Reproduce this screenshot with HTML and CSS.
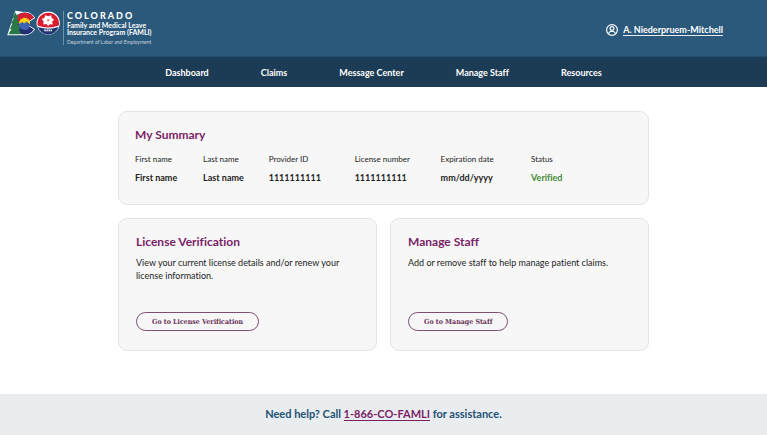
FILE: index.html
```html
<!DOCTYPE html>
<html lang="en">
<head>
<meta charset="utf-8">
<meta name="viewport" content="width=device-width, initial-scale=1">
<title>Colorado FAMLI</title>
<link rel="stylesheet" href="styles.css">
</head>
<body>
<header class="banner">
  <div class="brand">
    <svg class="brand-logo" viewBox="0 0 54 26" aria-hidden="true">
      <path d="M7.500-.5-.8 24.500H18V1z" fill="#fff"/>
      <circle cx="17" cy="12.500" r="12" fill="#fff"/>
      <circle cx="17" cy="12.500" r="11.200" fill="#23306f"/>
      <path d="M6 13A11.200 11.200 0 0 1 26.500 6.500L22 10a6 6 0 0 0-11 3z" fill="#d5202f"/>
      <circle cx="17" cy="12.500" r="5.800" fill="#fbd20b"/>
      <path d="m11.200 13 3.300-2 2 1.500 2.500-2 3.800 3a5.800 5.800 0 0 1-11.600-.5" fill="#3f62b5"/>
      <path d="M22.500 9.800 29 6v13.500l-6.500-4z" fill="#2b597c"/>
      <path d="m22 10 5.300-3.300M22 15.200l5.300 3.500" stroke="#fff"/>
      <path d="m7.500 1-3 6H6l-3 5.500h1.500L2 18h1.500L.5 23.500h13L11 18h1.500L10 12.500h1.500L9 7h1.500z" fill="#28784a"/>
      <circle cx="41" cy="12" r="11.800" fill="#fff"/>
      <path d="M30.200 14.500a11 11 0 1 1 21.600 0q-10.800 4-21.600 0" fill="#d91e32"/>
      <path d="M30.500 16q10.500 3.500 21 0a11 11 0 0 1-21 0" fill="#213570"/>
      <path d="m38 4 3 1 3-1 .5 3 2.500 1.500-2 2 .5 3-3-.2L41 15l-2-2-3 .5.3-3-2-2.500 2.700-1z" fill="#fff"/>
      <circle cx="41" cy="9" r="1.200" fill="#e9717a"/>
      <path d="M37 19.500h8" stroke="#fff" stroke-width="1.800" stroke-dasharray="1.500 .6"/>
    </svg>
    <div class="brand-text">
      <span class="brand-state">COLORADO</span>
      <span class="brand-program">Family and Medical Leave<br>Insurance Program (FAMLI)</span>
      <span class="brand-department">Department of Labor and Employment</span>
    </div>
  </div>
  <a class="account" href="#">
    <svg class="account-icon" viewBox="0 0 24 24" fill="none" stroke="currentColor" stroke-width="2.400" aria-hidden="true">
      <circle cx="12" cy="12" r="10.800"/>
      <circle cx="12" cy="9" r="3.800"/>
      <path d="M5.500 19.500v-1q1-3.500 4.500-3.500h4q3.500 0 4.500 3.500v1"/>
    </svg>
    <span class="account-name">A. Niederpruem-Mitchell</span>
  </a>
</header>
<nav class="menu" aria-label="Main">
  <a href="#">Dashboard</a>
  <a href="#">Claims</a>
  <a href="#">Message Center</a>
  <a href="#">Manage Staff</a>
  <a href="#">Resources</a>
</nav>
<main class="content">
  <section class="card summary">
    <h2>My Summary</h2>
    <table>
      <thead>
        <tr>
          <th class="col-name" scope="col">First name</th>
          <th class="col-surname" scope="col">Last name</th>
          <th class="col-number" scope="col">Provider ID</th>
          <th class="col-number" scope="col">License number</th>
          <th class="col-date" scope="col">Expiration date</th>
          <th scope="col">Status</th>
        </tr>
      </thead>
      <tbody>
        <tr>
          <td>First name</td>
          <td>Last name</td>
          <td>1111111111</td>
          <td>1111111111</td>
          <td>mm/dd/yyyy</td>
          <td class="verified">Verified</td>
        </tr>
      </tbody>
    </table>
  </section>
  <div class="actions">
    <section class="card action">
      <h2>License Verification</h2>
      <p>View your current license details and/or renew your license information.</p>
      <button type="button">Go to License Verification</button>
    </section>
    <section class="card action">
      <h2>Manage Staff</h2>
      <p>Add or remove staff to help manage patient claims.</p>
      <button type="button">Go to Manage Staff</button>
    </section>
  </div>
</main>
<footer class="help">
  <p>Need help? Call <a href="tel:1-866-26-32654">1-866-CO-FAMLI</a> for assistance.</p>
</footer>
</body>
</html>
```
FILE: styles.css
```css
* {
  box-sizing: border-box;
}

body {
  margin: 0;
  min-height: 100vh;
  display: flex;
  flex-direction: column;
  background: #fff;
  color: #232323;
  font-family: "Trebuchet MS", Lato, sans-serif;
  font-size: 9px;
  font-variant-ligatures: none;
}

h2,
p {
  margin: 0;
}

.banner {
  display: flex;
  justify-content: space-between;
  align-items: center;
  height: 57px;
  padding: 0 44px 0 8px;
  border-bottom: 1px solid #234e70;
  background: #2b597c;
  color: #fff;
}

.brand {
  display: flex;
  align-items: center;
  gap: 2px;
}

.brand-logo {
  width: 53px;
  height: 26px;
  margin-bottom: 8px;
  overflow: visible;
}

.brand-text {
  display: flex;
  flex-direction: column;
  padding-left: 3px;
  border-left: 1px solid #6f91aa;
  white-space: nowrap;
}

.brand-state {
  font-size: 9px;
  font-weight: 900;
  line-height: 9px;
  letter-spacing: 2px;
}

.brand-program {
  margin-top: 2px;
  font-size: 7px;
  font-weight: 700;
  line-height: 7px;
}

.brand-department {
  margin-top: 3px;
  color: #c5d4df;
  font-size: 5px;
  line-height: 6px;
}

.account {
  display: flex;
  align-items: center;
  gap: 5px;
  margin-top: 4px;
  color: #fff;
  font-weight: 700;
  line-height: 11px;
  text-decoration: none;
}

.account-icon {
  width: 12px;
  height: 12px;
}

.account-name {
  border-bottom: 1px solid #e4ecf2;
}

.menu {
  display: flex;
  justify-content: center;
  align-items: center;
  gap: 52px;
  height: 30px;
  background: #1c3b54;
}

.menu a {
  color: #fff;
  font-weight: 700;
  text-decoration: none;
  white-space: nowrap;
}

.content {
  flex: 1;
  display: flex;
  flex-direction: column;
  gap: 13px;
  width: 100%;
  max-width: 531px;
  margin: 0 auto;
  padding: 24px 0;
}

.card {
  padding: 16px;
  border: 1px solid #e4e4e4;
  border-radius: 9px;
  background: #f7f7f7;
}

.card h2 {
  color: #7a1f66;
  font-size: 12px;
  font-weight: 700;
  line-height: 14px;
}

.summary table {
  width: 100%;
  margin-top: 10px;
  border-collapse: collapse;
  table-layout: fixed;
}

.summary th,
.summary td {
  padding: 0;
  text-align: left;
  white-space: nowrap;
}

.summary th {
  font-size: 8px;
  font-weight: 400;
  line-height: 14px;
}

.summary td {
  padding-top: 5px;
  padding-bottom: 3px;
  font-weight: 700;
  line-height: 14px;
}

.summary .col-name {
  width: 13.7%;
}

.summary .col-surname {
  width: 13.2%;
}

.summary .col-number {
  width: 17.3%;
}

.summary .col-date {
  width: 18.2%;
}

.summary .verified {
  color: #438a36;
}

.actions {
  display: grid;
  grid-template-columns: 1fr 1fr;
  gap: 13px;
}

.action {
  display: flex;
  flex-direction: column;
  align-items: flex-start;
  min-height: 133px;
  padding: 16px 17px 19px;
}

.action p {
  max-width: 214px;
  margin-top: 7px;
  line-height: 13px;
}

.action button {
  height: 19px;
  margin-top: auto;
  padding: 0 15px;
  border: 1px solid #7d5070;
  border-radius: 10px;
  background: transparent;
  color: #673057;
  font-family: "DejaVu Serif Condensed", "DejaVu Serif", serif;
  font-size: 7px;
  font-weight: 700;
  font-variant-ligatures: none;
}

.help {
  display: flex;
  justify-content: center;
  align-items: center;
  height: 41px;
  background: #e9edf0;
  color: #235174;
  font-size: 11px;
  font-weight: 700;
}

.help p {
  line-height: 12px;
}

.help a {
  display: inline-block;
  border-bottom: 1px solid #7a1f66;
  color: #7a1f66;
  text-decoration: none;
}
```
